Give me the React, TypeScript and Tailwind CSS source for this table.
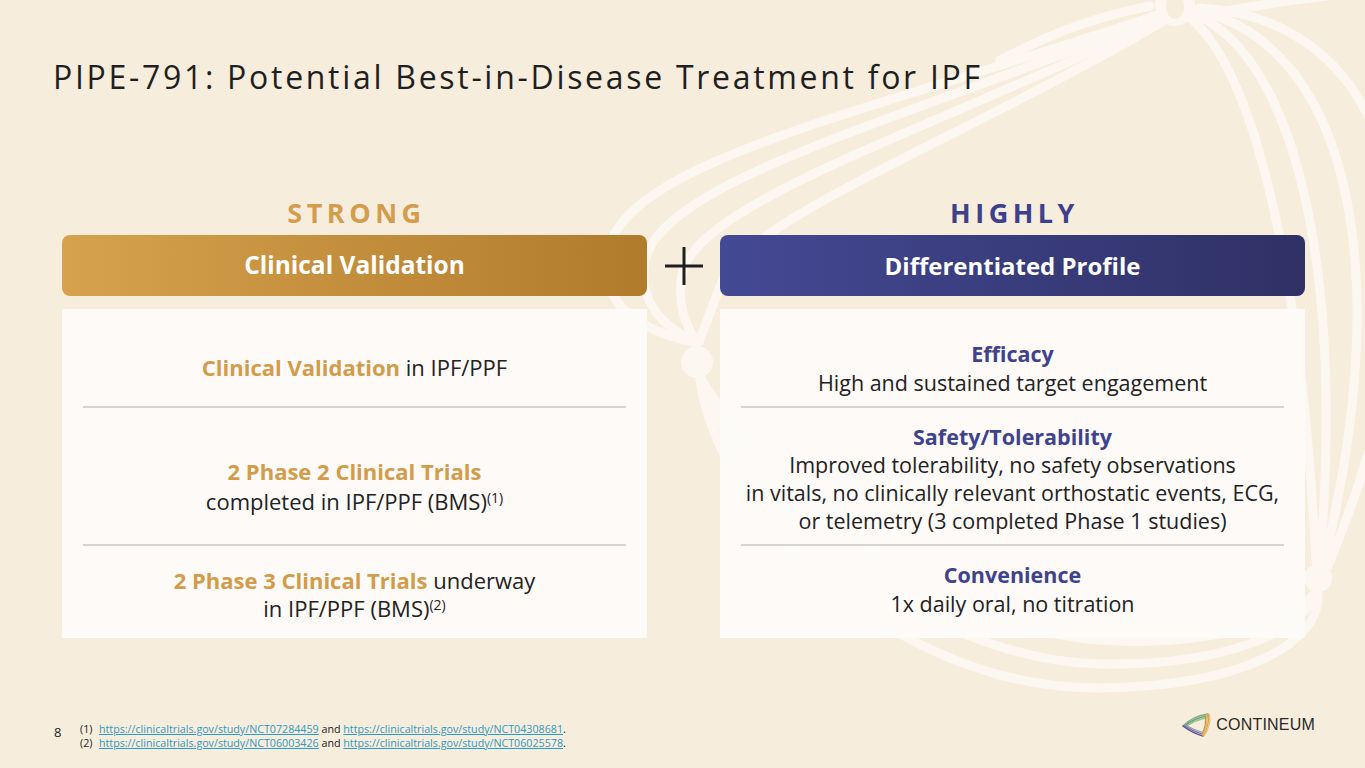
import React from "react";

function Background() {
  const c = "#fcf8f1";
  return (
    <svg className="absolute inset-0" width="1365" height="768" viewBox="0 0 1365 768" fill="none">
      <g stroke={c} strokeWidth="9" strokeLinecap="round" fill="none">
        {/* top -> left bundle */}
        <path d="M1172,10 C880,110 620,160 607,255 C600,305 640,330 693,342" />
        <path d="M1168,14 C900,120 665,180 645,260 C638,300 660,325 695,342" />
        <path d="M1165,18 C930,130 705,200 683,270 C676,300 685,325 697,342" />
        <path d="M1162,22 C960,140 745,220 722,282 C712,308 705,325 699,342" />
        <path d="M1150,6 C1080,20 1040,40 1000,60" />
        {/* left -> right bundle */}
        <path d="M700,380 C720,520 900,690 1100,688 C1250,686 1320,640 1318,595" />
        <path d="M701,380 C740,500 920,660 1100,664 C1230,666 1300,630 1316,595" />
        <path d="M702,380 C760,480 940,630 1100,640 C1210,648 1285,620 1314,595" />
        {/* top -> right bundle */}
        <path d="M1185,14 C1250,60 1300,250 1316,562" />
        <path d="M1190,12 C1290,50 1345,250 1320,562" />
        <path d="M1195,10 C1340,40 1400,250 1324,562" />
        <path d="M1200,8 C1400,20 1460,250 1328,566" />
        <path d="M1198,16 C1260,4 1320,-4 1380,-10" />
      </g>
      <circle cx="1175" cy="6" r="20" fill={c} />
      <ellipse cx="1175" cy="6" rx="9" ry="13" fill="#f7eddd" />
      <circle cx="697" cy="362" r="16" fill={c} />
      <circle cx="1318" cy="578" r="14" fill={c} />
    </svg>
  );
}

function Plus() {
  return (
    <svg width="40" height="40" viewBox="0 0 40 40">
      <path d="M1,20 H39 M20,1 V39" stroke="#1f1f1f" strokeWidth="3" />
    </svg>
  );
}

function Logo() {
  return (
    <div className="flex items-center gap-[3px]">
      <svg width="32" height="24" viewBox="0 0 32 24" fill="none">
        <g strokeWidth="1.3" fill="none" strokeLinecap="round">
          <path d="M2,13 Q12,3 27,1" stroke="#7fb07a" />
          <path d="M3,13.5 Q13,5 27.5,2.5" stroke="#5e9e8c" />
          <path d="M4,14 Q14,7 28,4" stroke="#9cc27f" />
          <path d="M2,13 Q11,20 22,23" stroke="#5b4b8d" />
          <path d="M3,12.5 Q12,18.5 22.5,21.5" stroke="#7b6aa8" />
          <path d="M4,12 Q13,17 23,20" stroke="#8a9fb0" />
          <path d="M27,1 Q29,12 22,23" stroke="#d7a64a" />
          <path d="M25.5,1.5 Q27.5,12 21.5,22" stroke="#e2bb6c" />
          <path d="M24,2.5 Q26,12 21,21" stroke="#c99a45" />
          <path d="M28.5,2 Q30.5,12 23,23" stroke="#e6c27a" />
        </g>
      </svg>
      <span className="font-['Liberation_Sans',Arial,sans-serif] text-[16px] leading-[20px] text-[#2a2a2a] tracking-[0.2px]">
        CONTINEUM
      </span>
    </div>
  );
}

function Link({ children }: { children: React.ReactNode }) {
  return <span className="text-[#2e9ac1] underline underline-offset-[1px]">{children}</span>;
}

export default function App() {
  return (
    <div className="relative w-[1365px] h-[768px] overflow-hidden bg-[#f7eddd] font-['Open_Sans',sans-serif] text-[#222222]">
      <Background />
      <div className="relative flex flex-col h-full">
        <h1 className="pl-[53px] pt-[57px] text-[32px] leading-[40px] tracking-[2.7px] font-normal text-[#1f1f1f]">
          PIPE-791: Potential Best-in-Disease Treatment for IPF
        </h1>

        <div className="mt-[100px] pl-[62px] grid grid-cols-[585px_73px_585px]">
          <div className="pl-[4px] text-center text-[27px] leading-[32px] font-bold tracking-[4.5px] text-[#d49d4e]">
            STRONG
          </div>
          <div />
          <div className="pl-[4px] text-center text-[27px] leading-[32px] font-bold tracking-[4.5px] text-[#3d418b]">
            HIGHLY
          </div>

          <div className="mt-[6px] h-[61px] rounded-[8px] bg-linear-to-r from-[#d7a24d] to-[#b07b2b] flex items-center justify-center text-white text-[24.5px] font-bold">
            Clinical Validation
          </div>
          <div className="mt-[6px] h-[61px] flex items-center justify-center">
            <Plus />
          </div>
          <div className="mt-[6px] h-[61px] rounded-[8px] bg-linear-to-r from-[#444994] to-[#2f3165] flex items-center justify-center text-white text-[24px] font-bold">
            Differentiated Profile
          </div>

          {/* left card */}
          <div className="mt-[13px] h-[329px] bg-[#fdfbf8]/95 flex flex-col text-[22px] text-center">
            <div className="h-[97px] pt-[44px] leading-[28px]">
              <span className="font-bold text-[#d39c4b]">Clinical Validation</span> in IPF/PPF
            </div>
            <div className="mx-[21px] h-[2px] bg-[#d6d4d0]" />
            <div className="h-[136px] pt-[48px] leading-[30px]">
              <div className="font-bold text-[#d39c4b]">2 Phase 2 Clinical Trials</div>
              <div>
                completed in IPF/PPF (BMS)<sup className="text-[14px]">(1)</sup>
              </div>
            </div>
            <div className="mx-[21px] h-[2px] bg-[#d6d4d0]" />
            <div className="flex-1 pt-[20px] leading-[28px]">
              <div>
                <span className="font-bold text-[#d39c4b]">2 Phase 3 Clinical Trials</span> underway
              </div>
              <div>
                in IPF/PPF (BMS)<sup className="text-[14px]">(2)</sup>
              </div>
            </div>
          </div>
          <div />
          {/* right card */}
          <div className="mt-[13px] h-[329px] bg-[#fdfbf8]/95 flex flex-col text-[21.5px] text-center">
            <div className="h-[97px] pt-[30px] leading-[29px]">
              <div className="font-bold text-[#3f438d]">Efficacy</div>
              <div>High and sustained target engagement</div>
            </div>
            <div className="mx-[21px] h-[2px] bg-[#d6d4d0]" />
            <div className="h-[136px] pt-[15px] leading-[28px]">
              <div className="font-bold text-[#3f438d]">Safety/Tolerability</div>
              <div>Improved tolerability, no safety observations</div>
              <div>in vitals, no clinically relevant orthostatic events, ECG,</div>
              <div>or telemetry (3 completed Phase 1 studies)</div>
            </div>
            <div className="mx-[21px] h-[2px] bg-[#d6d4d0]" />
            <div className="flex-1 pt-[14px] leading-[29px]">
              <div className="font-bold text-[#3f438d]">Convenience</div>
              <div>1x daily oral, no titration</div>
            </div>
          </div>
        </div>

        <div className="mt-[75px] flex items-start pl-[54px] pr-[50px]">
          <div className="mt-[11px] w-[26px] text-[13px] leading-[16px] text-[#222]">8</div>
          <div className="mt-[9px] text-[10.7px] leading-[14px] text-[#222]">
            <div>
              <span className="inline-block w-[19px]">(1)</span>
              <Link>https://clinicaltrials.gov/study/NCT07284459</Link> and{" "}
              <Link>https://clinicaltrials.gov/study/NCT04308681</Link>.
            </div>
            <div>
              <span className="inline-block w-[19px]">(2)</span>
              <Link>https://clinicaltrials.gov/study/NCT06003426</Link> and{" "}
              <Link>https://clinicaltrials.gov/study/NCT06025578</Link>.
            </div>
          </div>
          <div className="ml-auto">
            <Logo />
          </div>
        </div>
      </div>
    </div>
  );
}
